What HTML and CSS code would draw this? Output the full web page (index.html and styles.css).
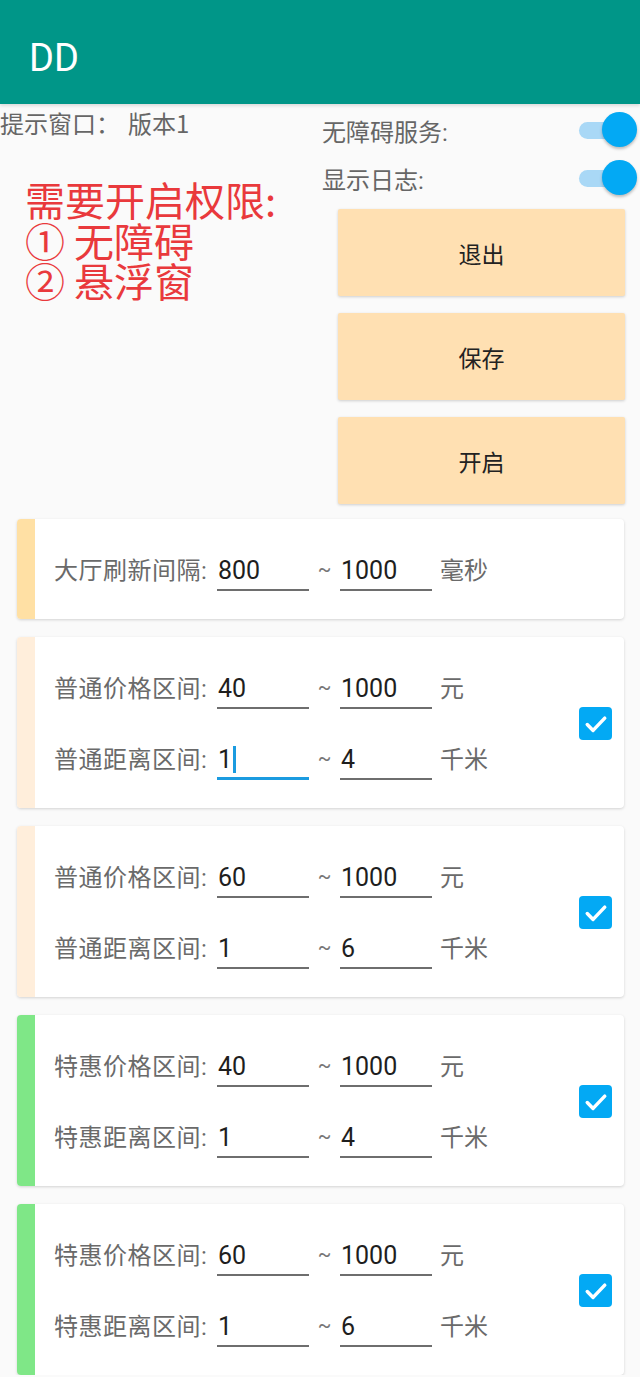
FILE: index.html
```html
<!DOCTYPE html>
<html lang="zh-CN">
<head>
  <meta charset="UTF-8">
  <title>DD</title>
  <meta name="viewport" content="width=device-width, initial-scale=1">
  <link rel="stylesheet" href="styles.css">
</head>
<body>

<header class="appbar">
  <h1 class="appbar-title">DD</h1>
</header>

<main class="page">

  <section class="top">
    <div class="top-left">
      <p class="hint">提示窗口：<span class="hint-version">版本1</span></p>
      <p class="notice">需要开启权限:<br>① 无障碍<br>② 悬浮窗</p>
    </div>

    <div class="top-right">
      <div class="switch-row">
        <span class="switch-label">无障碍服务:</span>
        <span class="switch on"><span class="switch-track"></span><span class="switch-thumb"></span></span>
      </div>
      <div class="switch-row">
        <span class="switch-label">显示日志:</span>
        <span class="switch on"><span class="switch-track"></span><span class="switch-thumb"></span></span>
      </div>

      <div class="actions">
        <button class="action-btn">退出</button>
        <button class="action-btn">保存</button>
        <button class="action-btn">开启</button>
      </div>
    </div>
  </section>

  <!-- range settings -->
  <section class="cards">

    <div class="card">
      <div class="accent accent-orange"></div>
      <div class="card-body">
        <div class="rows">
          <div class="range-row">
            <span class="range-label">大厅刷新间隔:</span>
            <span class="field">800</span>
            <span class="tilde">~</span>
            <span class="field">1000</span>
            <span class="unit">毫秒</span>
          </div>
        </div>
      </div>
    </div>

    <div class="card">
      <div class="accent accent-peach"></div>
      <div class="card-body">
        <div class="rows">
          <div class="range-row">
            <span class="range-label">普通价格区间:</span>
            <span class="field">40</span>
            <span class="tilde">~</span>
            <span class="field">1000</span>
            <span class="unit">元</span>
          </div>
          <div class="range-row">
            <span class="range-label">普通距离区间:</span>
            <span class="field focused">1<span class="caret"></span></span>
            <span class="tilde">~</span>
            <span class="field">4</span>
            <span class="unit">千米</span>
          </div>
        </div>
        <span class="checkbox"><svg viewBox="0 0 24 24" width="28" height="28"><path d="M4.5 12.5l5 5L19.5 7" fill="none" stroke="#fff" stroke-width="3" stroke-linecap="round" stroke-linejoin="round"/></svg></span>
      </div>
    </div>

    <div class="card">
      <div class="accent accent-peach"></div>
      <div class="card-body">
        <div class="rows">
          <div class="range-row">
            <span class="range-label">普通价格区间:</span>
            <span class="field">60</span>
            <span class="tilde">~</span>
            <span class="field">1000</span>
            <span class="unit">元</span>
          </div>
          <div class="range-row">
            <span class="range-label">普通距离区间:</span>
            <span class="field">1</span>
            <span class="tilde">~</span>
            <span class="field">6</span>
            <span class="unit">千米</span>
          </div>
        </div>
        <span class="checkbox"><svg viewBox="0 0 24 24" width="28" height="28"><path d="M4.5 12.5l5 5L19.5 7" fill="none" stroke="#fff" stroke-width="3" stroke-linecap="round" stroke-linejoin="round"/></svg></span>
      </div>
    </div>

    <div class="card">
      <div class="accent accent-green"></div>
      <div class="card-body">
        <div class="rows">
          <div class="range-row">
            <span class="range-label">特惠价格区间:</span>
            <span class="field">40</span>
            <span class="tilde">~</span>
            <span class="field">1000</span>
            <span class="unit">元</span>
          </div>
          <div class="range-row">
            <span class="range-label">特惠距离区间:</span>
            <span class="field">1</span>
            <span class="tilde">~</span>
            <span class="field">4</span>
            <span class="unit">千米</span>
          </div>
        </div>
        <span class="checkbox"><svg viewBox="0 0 24 24" width="28" height="28"><path d="M4.5 12.5l5 5L19.5 7" fill="none" stroke="#fff" stroke-width="3" stroke-linecap="round" stroke-linejoin="round"/></svg></span>
      </div>
    </div>

    <div class="card">
      <div class="accent accent-green"></div>
      <div class="card-body">
        <div class="rows">
          <div class="range-row">
            <span class="range-label">特惠价格区间:</span>
            <span class="field">60</span>
            <span class="tilde">~</span>
            <span class="field">1000</span>
            <span class="unit">元</span>
          </div>
          <div class="range-row">
            <span class="range-label">特惠距离区间:</span>
            <span class="field">1</span>
            <span class="tilde">~</span>
            <span class="field">6</span>
            <span class="unit">千米</span>
          </div>
        </div>
        <span class="checkbox"><svg viewBox="0 0 24 24" width="28" height="28"><path d="M4.5 12.5l5 5L19.5 7" fill="none" stroke="#fff" stroke-width="3" stroke-linecap="round" stroke-linejoin="round"/></svg></span>
      </div>
    </div>

  </section>
</main>

</body>
</html>
```

FILE: styles.css
```css
/* base */
* { box-sizing: border-box; }
body { margin: 0; background: #fafafa; font-family: Roboto, "Noto Sans CJK SC", sans-serif; color: #222; }
p { margin: 0; }

/* app bar */
.appbar { height: 104px; background: #009688; display: flex; align-items: center; padding: 12px 0 0 29px; box-shadow: 0 2px 3px rgba(0, 0, 0, 0.12); position: relative; }
.appbar-title { margin: 0; font-size: 38px; font-weight: 400; color: #fff; line-height: 1; }

/* top area */
.top { display: grid; grid-template-columns: 322px 1fr; }
.hint { font-size: 24px; line-height: 32px; padding-top: 3px; color: #666; font-family: "Noto Sans CJK SC", sans-serif; }
.hint-version { margin-left: 8px; }
.notice { margin-top: 40px; padding-left: 25px; font-size: 40px; line-height: 40.5px; color: #e9393c; font-family: "Noto Sans CJK SC", sans-serif; }

.top-right { padding-top: 2px; }
.switch-row { height: 48px; display: flex; align-items: center; justify-content: space-between; padding-right: 3px; }
.switch-label { font-size: 24px; color: #666; }
.switch { position: relative; width: 58px; height: 36px; }
.switch-track { position: absolute; left: 0; top: 10px; width: 44px; height: 17px; border-radius: 9px; background: #a9d8f6; }
.switch-thumb { position: absolute; right: 0; top: 0; width: 35px; height: 35px; border-radius: 50%; background: #03a9f4; box-shadow: 0 2px 3px rgba(0, 0, 0, 0.25); }

.actions { display: flex; flex-direction: column; gap: 17px; margin: 7px 15px 0 16px; }
.action-btn { height: 87px; border: 0; border-radius: 2px; background: #ffe0b2; font-family: "Noto Sans CJK SC", sans-serif; font-size: 23px; color: #222; box-shadow: 0 1px 3px rgba(0, 0, 0, 0.18); padding: 0; }

/* cards */
.cards { display: flex; flex-direction: column; gap: 18px; padding: 15px 16px 0 17px; }
.card { display: flex; background: #fff; border-radius: 4px; overflow: hidden; box-shadow: 0 1px 3px rgba(0, 0, 0, 0.16); }
.accent { width: 18px; flex: none; }
.accent-orange { background: #ffe0a4; }
.accent-peach { background: #ffeedb; }
.accent-green { background: #7fe787; }
.card-body { flex: 1; display: flex; align-items: center; padding: 30px 12px 28px 19px; }
.rows { flex: 1; display: flex; flex-direction: column; gap: 29px; }

.range-row { display: flex; align-items: flex-start; height: 42px; }
.range-label { width: 163px; font-size: 24px; letter-spacing: 0.5px; line-height: 44px; color: #6a6a6a; }
.field { width: 92px; height: 42px; line-height: 44px; font-size: 25px; color: #1e1e1e; border-bottom: 2px solid #6e6e6e; padding-left: 1px; }
.field.focused { border-bottom: 3px solid #1b9be0; }
.caret { display: inline-block; width: 3px; height: 27px; margin-left: 1px; background: #1b9be0; vertical-align: -5px; }
.tilde { width: 31px; text-align: center; font-size: 20px; line-height: 40px; color: #777; }
.unit { margin-left: 8px; font-size: 24px; line-height: 44px; color: #6a6a6a; }

.checkbox { width: 33px; height: 33px; flex: none; border-radius: 4px; background: #03a9f4; display: flex; align-items: center; justify-content: center; }
```
